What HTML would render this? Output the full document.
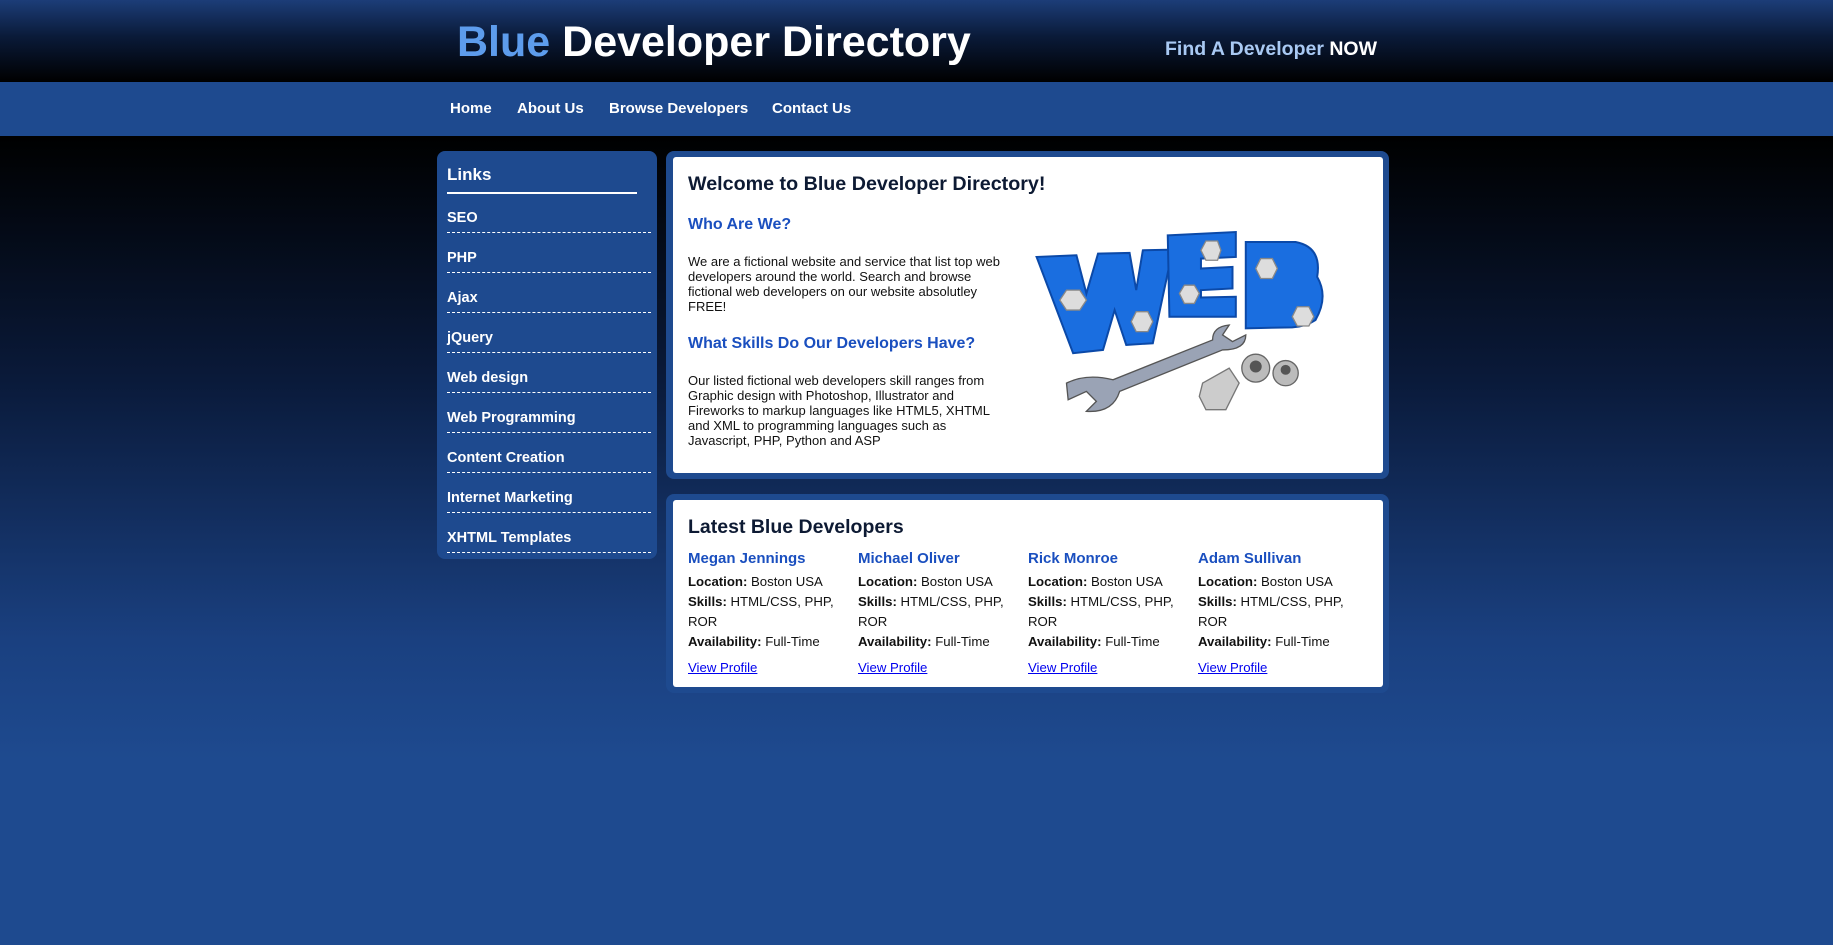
<!DOCTYPE html>
<html><head><meta charset="utf-8"><style>
*{margin:0;padding:0;box-sizing:border-box}
body{width:1833px;height:945px;overflow:hidden;font-family:"Liberation Sans",Arial,sans-serif;background:linear-gradient(#000 136px,#0a1a3a 380px,#1a4080 640px,#1e4a8f 760px,#1e4a8f 945px);position:relative}
#hdr{position:absolute;left:0;top:0;width:1833px;height:82px;background:linear-gradient(#1c3d78,#0a1a38 45%,#000 100%)}
#title{position:absolute;left:457px;top:18px;font-size:43px;font-weight:bold;color:#fff;white-space:nowrap}
#title span{color:#5d9cec}
#find{position:absolute;left:1165px;top:38px;font-size:19.5px;font-weight:bold;color:#a9c9f3;white-space:nowrap}
#find b{color:#fff}
#nav{position:absolute;left:0;top:82px;width:1833px;height:54px;background:#1e4a8f}
#nav a{position:absolute;top:18px;color:#fff;font-weight:bold;font-size:15px;text-decoration:none}
#side{position:absolute;left:437px;top:151px;width:220px;height:408px;background:#1e4a8f;border-radius:8px}
#side h3{position:absolute;left:10px;top:14px;color:#fff;font-size:17px}
#side .line{position:absolute;left:10px;top:41px;width:190px;height:2px;background:#fff}
.lk{position:absolute;left:10px;width:204px;height:40px;border-bottom:1px dashed #fff;color:#fff;font-weight:bold;font-size:14.5px;padding-top:17px}
.box{position:absolute;background:#1e4a8f;border-radius:8px}
.in{position:absolute;left:7px;top:6px;right:6px;bottom:6px;background:#fff;border-radius:3px}
h1{position:absolute;font-size:19.7px;color:#0d1a33}
h4{position:absolute;font-size:16px;color:#1a4fbf}
p.t{position:absolute;font-size:13px;line-height:15px;color:#111;width:320px}
.col{position:absolute;top:549px;width:165px;font-size:13.2px;line-height:20px;color:#111}
.col .n{font-size:15px;font-weight:bold;color:#1a4fbf;margin-bottom:3px}
.col a{display:block;color:#00e;margin-top:6px;text-decoration:underline}
</style></head><body>
<div id="hdr"><div id="title"><span>Blue</span> Developer Directory</div><div id="find">Find A Developer <b>NOW</b></div></div>
<div id="nav"><a style="left:450px">Home</a><a style="left:517px">About Us</a><a style="left:609px">Browse Developers</a><a style="left:772px">Contact Us</a></div>
<div id="side"><h3>Links</h3><div class="line"></div>
<div class="lk" style="top:42px">SEO</div>
<div class="lk" style="top:82px">PHP</div>
<div class="lk" style="top:122px">Ajax</div>
<div class="lk" style="top:162px">jQuery</div>
<div class="lk" style="top:202px">Web design</div>
<div class="lk" style="top:242px">Web Programming</div>
<div class="lk" style="top:282px">Content Creation</div>
<div class="lk" style="top:322px">Internet Marketing</div>
<div class="lk" style="top:362px">XHTML Templates</div>
</div>
<div class="box" style="left:666px;top:151px;width:723px;height:328px"><div class="in"></div></div>
<h1 style="left:688px;top:173px">Welcome to Blue Developer Directory!</h1>
<h4 style="left:688px;top:216px">Who Are We?</h4>
<p class="t" style="left:688px;top:254px">We are a fictional website and service that list top web developers around the world. Search and browse fictional web developers on our website absolutley FREE!</p>
<h4 style="left:688px;top:335px">What Skills Do Our Developers Have?</h4>
<p class="t" style="left:688px;top:373px">Our listed fictional web developers skill ranges from Graphic design with Photoshop, Illustrator and Fireworks to markup languages like HTML5, XHTML and XML to programming languages such as Javascript, PHP, Python and ASP</p>
<svg style="position:absolute;left:1020px;top:210px" width="340" height="230" viewBox="0 0 1024 690">
<g fill="#1a6ee0" stroke="#0b49a8" stroke-width="6">
<path d="M50 140 L170 135 L200 250 L235 130 L330 128 L350 240 L370 120 L460 118 L400 400 L320 405 L285 300 L250 420 L160 430 Z"/>
<path d="M445 75 L650 65 L650 140 L545 145 L545 175 L640 170 L640 235 L545 240 L545 262 L650 260 L650 320 L450 320 Z"/>
<path d="M680 95 L830 95 Q910 110 895 200 Q930 260 890 330 Q860 350 820 352 L680 355 Z"/>
</g>
<g fill="#ddd" stroke="#888" stroke-width="4">
<polygon points="120,270 140,240 180,240 200,270 180,300 140,300"/><polygon points="335,335 350,305 385,305 400,335 385,365 350,365"/>
<polygon points="545,120 560,92 595,92 605,120 595,150 560,150"/><polygon points="480,250 495,225 525,225 540,250 525,280 495,280"/>
<polygon points="710,175 725,145 760,145 775,175 760,205 725,205"/><polygon points="820,320 835,290 870,290 885,320 870,348 835,348"/>
</g>
<path d="M140 520 Q200 490 280 510 L580 390 Q580 350 630 345 L610 375 L640 395 L680 375 Q680 420 610 420 L300 545 Q280 610 200 605 L230 575 L200 545 L145 570 Z" fill="#9aa3b5" stroke="#555" stroke-width="4"/>
<path d="M550 520 L630 475 L660 520 L620 600 L560 600 L540 560 Z" fill="#ccc" stroke="#777" stroke-width="4"/>
<circle cx="710" cy="475" r="42" fill="#bbb" stroke="#666" stroke-width="4"/><circle cx="710" cy="470" r="18" fill="#555"/>
<circle cx="800" cy="490" r="38" fill="#bbb" stroke="#666" stroke-width="4"/><circle cx="800" cy="480" r="15" fill="#555"/>
</svg>
<div class="box" style="left:666px;top:494px;width:723px;height:199px"><div class="in"></div></div>
<h1 style="left:688px;top:516px;font-size:19.5px">Latest Blue Developers</h1>
<div class="col" style="left:688px"><div class="n">Megan Jennings</div><b>Location:</b> Boston USA<br><b>Skills:</b> HTML/CSS, PHP, ROR<br><b>Availability:</b> Full-Time<a>View Profile</a></div>
<div class="col" style="left:858px"><div class="n">Michael Oliver</div><b>Location:</b> Boston USA<br><b>Skills:</b> HTML/CSS, PHP, ROR<br><b>Availability:</b> Full-Time<a>View Profile</a></div>
<div class="col" style="left:1028px"><div class="n">Rick Monroe</div><b>Location:</b> Boston USA<br><b>Skills:</b> HTML/CSS, PHP, ROR<br><b>Availability:</b> Full-Time<a>View Profile</a></div>
<div class="col" style="left:1198px"><div class="n">Adam Sullivan</div><b>Location:</b> Boston USA<br><b>Skills:</b> HTML/CSS, PHP, ROR<br><b>Availability:</b> Full-Time<a>View Profile</a></div>
</body></html>
